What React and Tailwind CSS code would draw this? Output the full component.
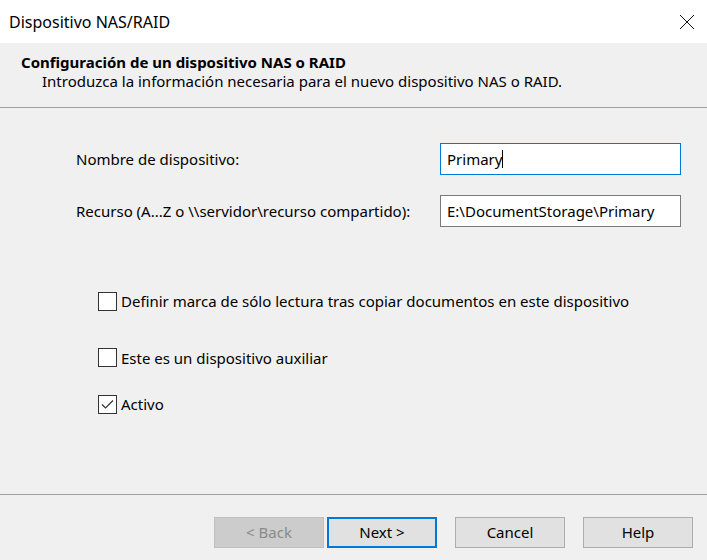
export default function App() {
  const f = { fontFamily: '"Noto Sans", "Liberation Sans", sans-serif' };
  const Box = ({ checked }) => (
    <div className="w-[19px] h-[19px] border border-[#333] bg-white flex items-center justify-center shrink-0">
      {checked && (
        <svg width="15" height="15" viewBox="0 0 15 15"><path d="M2 7.5 L5.5 11 L13 3.5" fill="none" stroke="#333" strokeWidth="1.2" /></svg>
      )}
    </div>
  );
  const Btn = ({ children, cls }) => (
    <div className={`w-[110px] h-[31px] flex items-center justify-center text-[15px] ${cls}`}>{children}</div>
  );
  return (
    <div style={f} className="w-[707px] h-[560px] bg-[#f0f0f0] flex flex-col text-[#000] overflow-hidden">
      <div className="h-[43px] bg-white flex items-center justify-between pl-[9px] pr-[12px]">
        <span className="text-[16px]">Dispositivo NAS/RAID</span>
        <svg width="16" height="16" viewBox="0 0 16 16"><path d="M1 1 L15 15 M15 1 L1 15" stroke="#111" strokeWidth="1" /></svg>
      </div>
      <div className="h-[65px] border-b border-[#a0a0a0] pl-[21px] pt-[10px] leading-[19px]">
        <div className="font-bold text-[15px]">Configuración de un dispositivo NAS o RAID</div>
        <div className="pl-[21px] text-[15px]">Introduzca la información necesaria para el nuevo dispositivo NAS o RAID.</div>
      </div>
      <div className="h-[387px] border-b border-[#a0a0a0] flex flex-col">
        <div className="mt-[35px] flex items-center pl-[76px] pr-[26px] justify-between">
          <span className="text-[15px]">Nombre de dispositivo:</span>
          <div className="w-[241px] h-[32px] bg-white border border-[#0078d7] flex items-center px-[6px] text-[15px]">Primary<span className="w-px h-[18px] bg-black" /></div>
        </div>
        <div className="mt-[20px] flex items-center pl-[76px] pr-[26px] justify-between">
          <span className="text-[15px]">Recurso (A...Z o \\servidor\recurso compartido):</span>
          <div className="w-[241px] h-[32px] bg-white border border-[#7a7a7a] flex items-center px-[6px] text-[15px]">E:\DocumentStorage\Primary</div>
        </div>
        <div className="mt-[63px] pl-[98px] flex flex-col text-[15px]">
          <div className="flex items-center gap-[4px]"><Box /><span>Definir marca de sólo lectura tras copiar documentos en este dispositivo</span></div>
          <div className="flex items-center gap-[4px] mt-[34px]"><Box /><span>Este es un dispositivo auxiliar</span></div>
          <div className="flex items-center gap-[4px] mt-[24px]"><Box checked /><span>Activo</span></div>
        </div>
      </div>
      <div className="flex pl-[214px] pt-[22px]">
        <Btn cls="bg-[#cccccc] border border-[#bfbfbf] text-[#8a8a8a]">&lt; Back</Btn>
        <Btn cls="ml-[3px] bg-[#e1e1e1] border-2 border-[#0078d7]">Next &gt;</Btn>
        <Btn cls="ml-[18px] bg-[#e1e1e1] border border-[#adadad]">Cancel</Btn>
        <Btn cls="ml-[18px] bg-[#e1e1e1] border border-[#adadad]">Help</Btn>
      </div>
    </div>
  );
}
